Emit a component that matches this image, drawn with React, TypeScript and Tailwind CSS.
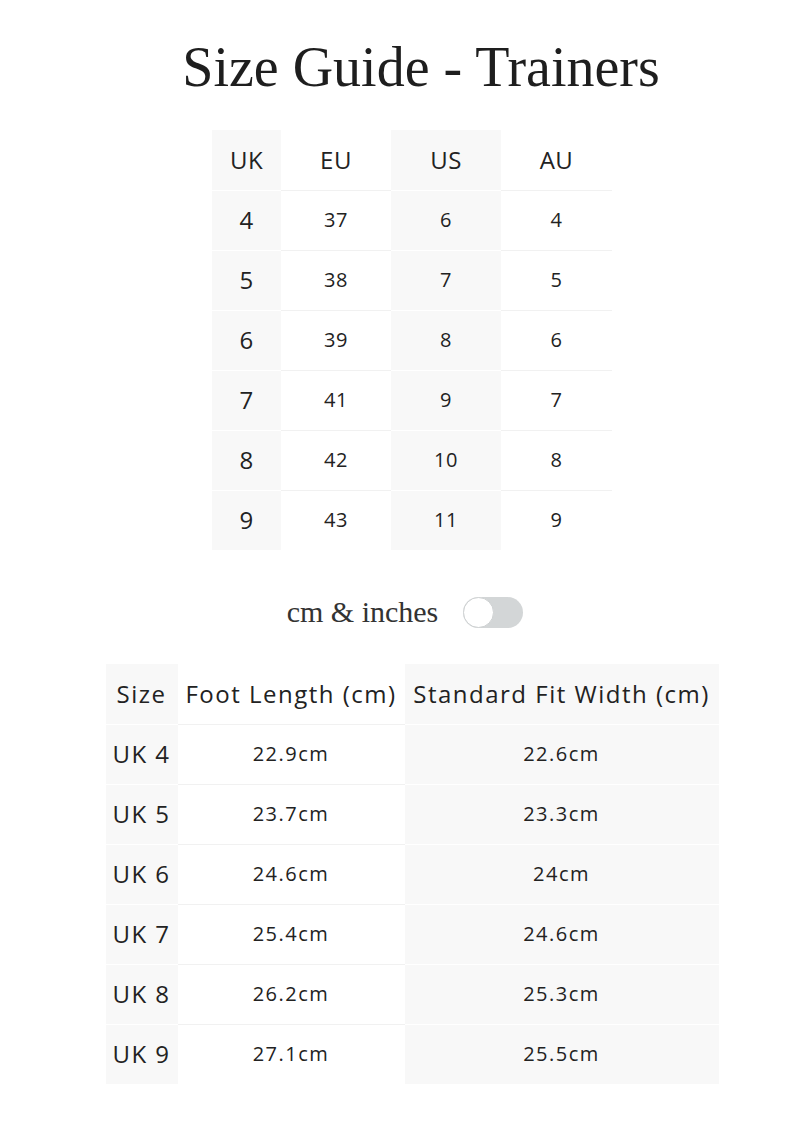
import React from "react";

const t1 = [
  ["4", "37", "6", "4"],
  ["5", "38", "7", "5"],
  ["6", "39", "8", "6"],
  ["7", "41", "9", "7"],
  ["8", "42", "10", "8"],
  ["9", "43", "11", "9"],
];

const t2 = [
  ["UK 4", "22.9cm", "22.6cm"],
  ["UK 5", "23.7cm", "23.3cm"],
  ["UK 6", "24.6cm", "24cm"],
  ["UK 7", "25.4cm", "24.6cm"],
  ["UK 8", "26.2cm", "25.3cm"],
  ["UK 9", "27.1cm", "25.5cm"],
];

const sans = { fontFamily: '"Open Sans", "Noto Sans", sans-serif' };

export default function App() {
  return (
    <div className="w-[800px] min-h-[1139px] bg-white text-[#222]">
      <div className="flex flex-col items-center pl-[24px]">
        <h1
          className="mt-[34px] pl-[18px] text-[56px] leading-[66px] text-[#1e1e1e]"
          style={{ fontFamily: '"Liberation Serif", serif' }}
        >
          Size Guide - Trainers
        </h1>

        <table className="mt-[30px] border-collapse" style={sans}>
          <tbody>
            <tr className="h-[60px]">
              {["UK", "EU", "US", "AU"].map((h, i) => (
                <td
                  key={h}
                  className={`text-center text-[24px] tracking-[0.5px] border-b ${
                    i % 2 === 0 ? "bg-[#f8f8f8] border-white" : "bg-white border-[#f1f1f1]"
                  } ${i === 0 ? "w-[69px]" : i === 3 ? "w-[111px]" : "w-[110px]"}`}
                >
                  {h}
                </td>
              ))}
            </tr>
            {t1.map((r, ri) => (
              <tr key={ri} className="h-[60px]">
                {r.map((c, i) => (
                  <td
                    key={i}
                    className={`text-center ${i === 0 ? "text-[24px]" : "text-[20px]"} tracking-[0.5px] ${
                      ri < t1.length - 1 ? "border-b" : ""
                    } ${i % 2 === 0 ? "bg-[#f8f8f8] border-white" : "bg-white border-[#f1f1f1]"}`}
                  >
                    {c}
                  </td>
                ))}
              </tr>
            ))}
          </tbody>
        </table>

        <div className="mt-[42px] flex items-center pr-[14px]">
          <span
            className="text-[30px] leading-[40px] text-[#333]"
            style={{ fontFamily: '"Liberation Serif", serif' }}
          >
            cm &amp; inches
          </span>
          <div className="ml-[25px] relative w-[60px] h-[31px] rounded-full bg-[#d3d6d7]">
            <div className="absolute left-0 top-0 w-[31px] h-[31px] rounded-full bg-white border border-[#cfd2d3]" />
          </div>
        </div>

        <table className="mt-[32px] border-collapse" style={sans}>
          <tbody>
            <tr className="h-[60px]">
              {["Size", "Foot Length (cm)", "Standard Fit Width (cm)"].map((h, i) => (
                <td
                  key={h}
                  className={`text-center text-[24px] tracking-[1.5px] whitespace-nowrap border-b ${
                    i % 2 === 0 ? "bg-[#f8f8f8] border-white" : "bg-white border-[#f1f1f1]"
                  } ${i === 0 ? "w-[72px]" : i === 1 ? "w-[227px]" : "w-[314px]"}`}
                >
                  {h}
                </td>
              ))}
            </tr>
            {t2.map((r, ri) => (
              <tr key={ri} className="h-[60px]">
                {r.map((c, i) => (
                  <td
                    key={i}
                    className={`text-center ${i === 0 ? "text-[24px]" : "text-[20px]"} tracking-[1.5px] whitespace-nowrap ${
                      ri < t2.length - 1 ? "border-b" : ""
                    } ${i % 2 === 0 ? "bg-[#f8f8f8] border-white" : "bg-white border-[#f1f1f1]"}`}
                  >
                    {c}
                  </td>
                ))}
              </tr>
            ))}
          </tbody>
        </table>
      </div>
    </div>
  );
}
